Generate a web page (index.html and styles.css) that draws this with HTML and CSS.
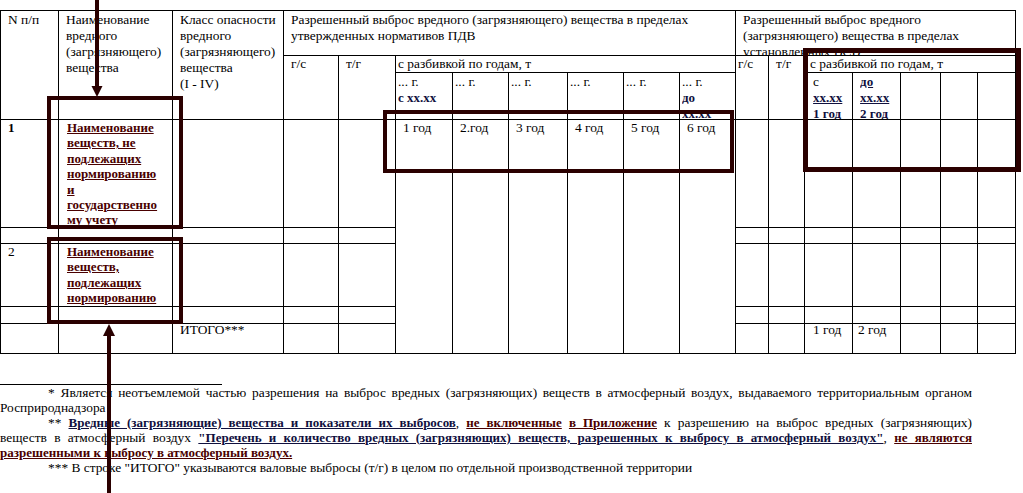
FILE: index.html
```html
<!DOCTYPE html>
<html lang="ru">

<head>
    <meta charset="UTF-8">
    <title>Разрешенный выброс вредных веществ</title>
    <link rel="stylesheet" href="styles.css">
</head>

<body>
    <div class="page">
        <table class="grid">
            <colgroup>
                <col style="width:58px"><col style="width:114px"><col style="width:111px">
                <col style="width:55px"><col style="width:57px">
                <col style="width:57px"><col style="width:56px"><col style="width:59px">
                <col style="width:56px"><col style="width:56px"><col style="width:56px">
                <col style="width:33px"><col style="width:36px">
                <col style="width:48px"><col style="width:48px"><col style="width:40px">
                <col style="width:37px"><col style="width:38px">
            </colgroup>
            <tr class="row-head">
                <td rowspan="3">N п/п</td>
                <td rowspan="3">Наименование вредного (загрязняющего) вещества</td>
                <td rowspan="3">Класс опасности<br>вредного<br>(загрязняющего)<br>вещества<br>(I - IV)</td>
                <td colspan="8">Разрешенный выброс вредного (загрязняющего) вещества в пределах<br>утвержденных нормативов ПДВ</td>
                <td colspan="7">
                    <div class="clip clip-head">Разрешенный выброс вредного<br>(загрязняющего) вещества в пределах<br>установленных ВСВ</div>
                </td>
            </tr>
            <tr class="row-split">
                <td rowspan="2">г/с</td>
                <td rowspan="2">т/г</td>
                <td colspan="6" class="tight">с разбивкой по годам, т</td>
                <td rowspan="2" class="tight">г/с</td>
                <td rowspan="2">т/г</td>
                <td colspan="5" class="mid">с разбивкой по годам, т</td>
            </tr>
            <tr class="row-years">
                <td class="tight"><div class="clip clip-years">... г.<br><b class="navy">с хх.хх</b></div></td>
                <td class="tight"><div class="clip clip-years">... г.</div></td>
                <td class="tight"><div class="clip clip-years">... г.</div></td>
                <td class="tight"><div class="clip clip-years">... г.</div></td>
                <td class="tight"><div class="clip clip-years">... г.</div></td>
                <td class="tight"><div class="clip clip-years">... г.<br><b class="navy">до<br>хх.хх</b></div></td>
                <td class="wide"><div class="clip clip-years">с<br><b class="navy line">хх.хх</b><br><b class="navy line">1 год</b></div></td>
                <td><div class="clip clip-years"><b class="navy line">до</b><br><b class="navy line">хх.хх</b><br><b class="navy line">2 год</b></div></td>
                <td></td>
                <td></td>
                <td></td>
            </tr>
            <tr class="row-one">
                <td><b>1</b></td>
                <td class="name"><div class="clip clip-name"><b class="maroon line">Наименование<br>веществ, не<br>подлежащих<br>нормированию<br>и<br>государственно<br>му учету</b></div></td>
                <td></td>
                <td></td>
                <td></td>
                <td rowspan="5" class="year">1 год</td>
                <td rowspan="5" class="year">2.год</td>
                <td rowspan="5" class="year">3 год</td>
                <td rowspan="5" class="year">4 год</td>
                <td rowspan="5" class="year">5 год</td>
                <td rowspan="5" class="year">6 год</td>
                <td></td><td></td><td></td><td></td><td></td><td></td><td></td>
            </tr>
            <tr class="row-gap">
                <td></td><td></td><td></td><td></td><td></td>
                <td></td><td></td><td></td><td></td><td></td><td></td><td></td>
            </tr>
            <tr class="row-two">
                <td>2</td>
                <td class="name"><b class="maroon line">Наименование<br>веществ,<br>подлежащих<br>нормированию</b></td>
                <td></td><td></td><td></td>
                <td></td><td></td><td></td><td></td><td></td><td></td><td></td>
            </tr>
            <tr class="row-gap2">
                <td></td><td></td><td></td><td></td><td></td>
                <td></td><td></td><td></td><td></td><td></td><td></td><td></td>
            </tr>
            <tr class="row-total">
                <td></td><td></td><td>ИТОГО***</td><td></td><td></td>
                <td></td><td></td><td class="wide">1 год</td><td class="mid">2 год</td><td></td><td></td><td></td>
            </tr>
        </table>

        <div class="notes">
            <div class="rule"></div>
            <p>
                <span class="ln fill lead">* Является неотъемлемой частью разрешения на выброс вредных (загрязняющих) веществ в атмосферный воздух, выдаваемого территориальным органом</span>
                <span class="ln">Росприроднадзора</span>
            </p>
            <p>
                <span class="ln fill lead">** <b class="navy line">Вредные (загрязняющие) вещества и показатели их выбросов</b>, <b class="maroon line">не включенные</b> <b class="maroon line">в Приложение</b> к разрешению на выброс вредных (загрязняющих)</span>
                <span class="ln fill">веществ в атмосферный воздух <b class="navy line">"Перечень и количество вредных (загрязняющих) веществ, разрешенных к выбросу в атмосферный воздух"</b>, <b class="maroon line">не являются</b></span>
                <span class="ln"><b class="maroon line">разрешенными к выбросу в атмосферный воздух.</b></span>
            </p>
            <p>
                <span class="ln lead">*** В строке "ИТОГО" указываются валовые выбросы (т/г) в целом по отдельной производственной территории</span>
            </p>
        </div>

        <!-- пометки поверх таблицы -->
        <svg class="marks" width="1023" height="493" viewBox="0 0 1023 493">
            <g fill="none" stroke="#2a0000" stroke-width="4">
                <rect x="49" y="98" width="132" height="129"/>
                <rect x="49" y="239" width="132" height="83"/>
                <rect x="385" y="112" width="347" height="59"/>
                <rect x="805.5" y="50.5" width="213" height="119" stroke-width="5"/>
            </g>
            <g fill="#2a0000">
                <rect x="95" y="0" width="4" height="88"/>
                <polygon points="91.5,86 102.5,86 97,97"/>
                <rect x="107" y="334" width="4" height="159"/>
                <polygon points="103,336 115,336 109,324"/>
            </g>
        </svg>
    </div>
</body>

</html>
```

FILE: styles.css
```css
body {
    margin: 0;
    background: #ffffff;
    color: #000000;
    font-family: "Liberation Serif", "Times New Roman", serif;
    font-size: 13.4px;
    line-height: 16px;
}

b {
    font-size: 13px;
}

.page {
    position: relative;
    width: 1023px;
    height: 493px;
    padding-top: 10px;
    box-sizing: border-box;
    overflow: hidden;
}

/* таблица */
.grid {
    border-collapse: collapse;
    table-layout: fixed;
    width: 1015px;
}

.grid td {
    border: 1px solid #000000;
    padding: 1px 3px 0 7px;
    vertical-align: top;
    overflow: hidden;
}

.grid td.tight {
    padding-left: 2px;
}

.grid td.mid {
    padding-left: 5px;
}

.grid td.wide {
    padding-left: 8px;
}

.grid td.year {
    padding-left: 7px;
    padding-top: 0;
    line-height: 15.5px;
}

.row-head { height: 45px; }
.row-split { height: 17px; }
.row-years { height: 47px; }
.row-one { height: 108px; }
.row-gap { height: 16px; }
.row-two { height: 62px; }
.row-gap2 { height: 17px; }
.row-total { height: 30px; }

.row-split td {
    padding-top: 0;
}

.row-one td,
.row-two td {
    padding-top: 0;
    line-height: 15.4px;
}

.row-total td {
    padding-top: 0;
    line-height: 11.5px;
}

.grid td.name {
    padding-left: 8px;
}

.clip {
    overflow: hidden;
}

.clip-head { height: 43px; }
.clip-years { height: 45px; }
.clip-name { height: 107px; }

.navy { color: #10103e; }
.maroon { color: #4a0000; }
.line { text-decoration: underline; }

/* сноски */
.notes {
    margin-top: 30px;
}

.rule {
    width: 222px;
    border-top: 1px solid #000000;
}

.notes p {
    width: 972px;
    margin: 0;
    line-height: 15px;
}

.notes .ln {
    display: block;
    white-space: nowrap;
}

.notes .fill {
    text-align: justify;
    text-align-last: justify;
}

.notes .lead {
    padding-left: 48px;
}

/* пометки */
.marks {
    position: absolute;
    left: 0;
    top: 0;
    pointer-events: none;
}
```
